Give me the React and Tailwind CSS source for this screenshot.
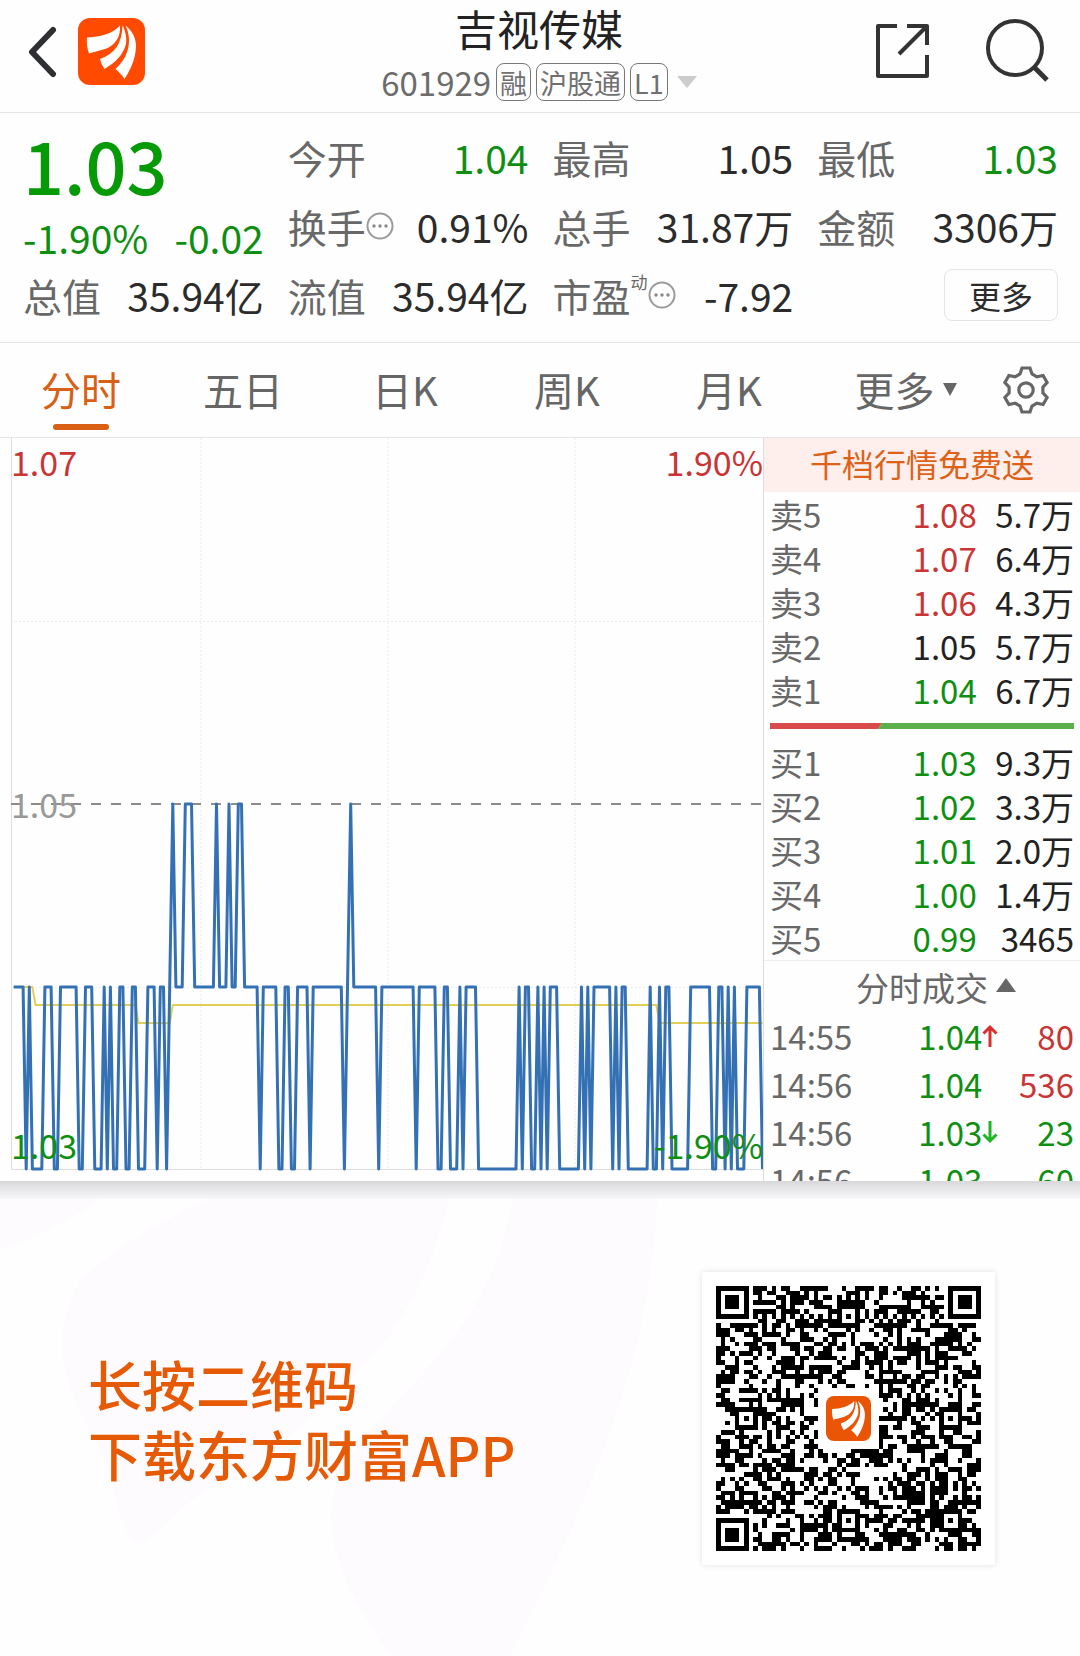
import React from "react";

const H = 366;
const M = 549;
const L = 731;

// Minute prices as runs: [level, number of minutes]
const PRICE_RUNS = [
  [M, 4], [L, 1], [M, 1], [L, 4], [M, 3], [L, 2], [M, 6], [L, 2], [M, 3], [L, 3],
  [M, 1], [L, 1], [M, 1], [L, 2], [M, 2], [L, 2], [M, 2], [L, 3], [M, 3], [L, 1],
  [M, 2], [L, 1], [M, 1], [H, 1], [M, 3], [H, 3], [M, 7], [H, 1], [M, 3], [H, 1],
  [M, 2], [H, 2], [M, 5], [L, 1], [M, 5], [L, 2], [M, 2], [L, 2], [M, 4], [L, 1],
  [M, 10], [L, 1], [M, 1], [H, 1], [M, 8], [L, 1], [M, 11], [L, 1], [M, 6], [L, 2],
  [M, 2], [L, 3], [M, 1], [L, 1], [M, 4], [L, 13], [M, 1], [L, 1], [M, 2], [L, 2],
  [M, 1], [L, 1], [M, 1], [L, 1], [M, 3], [L, 7], [M, 1], [L, 1], [M, 1], [L, 1],
  [M, 6], [L, 1], [M, 1], [L, 1], [M, 2], [L, 7], [M, 1], [L, 2], [M, 1], [L, 1],
  [M, 2], [L, 6], [M, 7], [L, 2], [M, 2], [L, 1], [M, 1], [L, 1], [M, 1], [L, 3],
  [M, 5], [L, 1],
];
const AVERAGE_RUNS = [[M, 7], [567, 33], [585, 11], [567, 156], [585, 34]];

function toPoints(runs) {
  const points = [];
  let minute = 0;
  runs.forEach(([level, count]) => {
    for (let k = 0; k < count; k += 1) {
      points.push(`${(2.7 + minute * 3.12).toFixed(1)},${level}`);
      minute += 1;
    }
  });
  return points.join(" ");
}

// Six-toothed gear outline around (25, 25)
const GEAR_POINTS = [0, 60, 120, 180, 240, 300]
  .flatMap((deg) => {
    const a = (deg * Math.PI) / 180;
    return [[-6, 16], [-4, 22], [4, 22], [6, 16]].map(([t, r]) => {
      const x = 25 + t * Math.cos(a) + r * Math.sin(a);
      const y = 25 + t * Math.sin(a) - r * Math.cos(a);
      return `${x.toFixed(1)},${y.toFixed(1)}`;
    });
  })
  .join(" ");

function BrandMark({ className, fill }) {
  return (
    <svg viewBox="0 0 67 67" className={className} aria-hidden="true">
      <rect width="67" height="67" rx="12" fill={fill} />
      <path fill="#fff" d="M9 19.500C22 19 34 16 42 7.500C43 20 36 28 27 31C21 33 15 34 11 35.500C9 30 8.500 25 9 19.500Z" />
      <path fill="#fff" d="M44.500 7.500C44 25 37 36 22 41C23 45 24.500 48 26.500 51C38 44 45 37 48 26C49 19 47 12 44.500 7.500Z" />
      <path fill="#fff" d="M47.500 7.500C55 23 50 40 37.500 51C41 54 44 57 46.500 61C55 48 58 37 58 27C57.500 18 53 12 47.500 7.500Z" />
    </svg>
  );
}

function Dots() {
  return (
    <svg viewBox="0 0 28 28" className="size-7 shrink-0" aria-hidden="true">
      <circle cx="14" cy="14" r="12.5" fill="none" stroke="#9a9a9a" strokeWidth="2" />
      <circle cx="8" cy="14" r="1.7" fill="#888" />
      <circle cx="14" cy="14" r="1.7" fill="#888" />
      <circle cx="20" cy="14" r="1.7" fill="#888" />
    </svg>
  );
}

function Quote({ label, value, color = "text-[#2b2b2b]", dots, note }) {
  return (
    <div className="flex h-[69px] items-center justify-between whitespace-nowrap">
      <dt className="flex items-center text-[#686868]">
        {label}
        {note && <span className="self-start text-[17px] leading-5">{note}</span>}
        {dots && <Dots />}
      </dt>
      <dd className={color}>{value}</dd>
    </div>
  );
}

function Tag({ children }) {
  return (
    <span className="flex h-[38px] items-center rounded-lg border border-[#777] px-[3px] text-[27px] leading-none text-[#707070]">
      {children}
    </span>
  );
}

const RED = "text-[#c93535]";
const GREEN = "text-[#0f8f12]";
const DARK = "text-[#222]";

const SELLS = [
  ["卖5", "1.08", "5.7万", RED],
  ["卖4", "1.07", "6.4万", RED],
  ["卖3", "1.06", "4.3万", RED],
  ["卖2", "1.05", "5.7万", DARK],
  ["卖1", "1.04", "6.7万", GREEN],
];
const BUYS = [
  ["买1", "1.03", "9.3万", GREEN],
  ["买2", "1.02", "3.3万", GREEN],
  ["买3", "1.01", "2.0万", GREEN],
  ["买4", "1.00", "1.4万", GREEN],
  ["买5", "0.99", "3465", GREEN],
];
const TRADES = [
  ["14:55", "1.04", "up", "80", RED],
  ["14:56", "1.04", "", "536", RED],
  ["14:56", "1.03", "down", "23", GREEN],
  ["14:56", "1.03", "", "60", GREEN],
];

function Book({ rows }) {
  return (
    <table className="w-full table-fixed text-right text-[33px] leading-[44px]">
      <tbody>
        {rows.map(([name, price, amount, color]) => (
          <tr key={name} className="h-11">
            <th scope="row" className="w-[28%] p-0 text-left font-normal text-[#686868]">{name}</th>
            <td className={`p-0 ${color}`}>{price}</td>
            <td className="w-[32%] p-0 text-[#222]">{amount}</td>
          </tr>
        ))}
      </tbody>
    </table>
  );
}

function Arrow({ dir }) {
  if (!dir) return null;
  return dir === "up" ? (
    <svg viewBox="0 0 16 24" className="h-6 w-4" fill="none" stroke="#d92f2f" strokeWidth="3" aria-label="up">
      <path d="M8 23V3M1.5 9.5L8 3L14.5 9.5" />
    </svg>
  ) : (
    <svg viewBox="0 0 16 24" className="h-6 w-4" fill="none" stroke="#1fb526" strokeWidth="3" aria-label="down">
      <path d="M8 1V21M1.5 14.5L8 21L14.5 14.5" />
    </svg>
  );
}

// 57-module matrix code with finder, timing and alignment patterns
const SIZE = 57;
function buildCode() {
  let seed = 20231;
  const next = () => {
    seed = (seed * 1103515245 + 12345) % 2147483648;
    return seed / 2147483648;
  };
  const grid = Array.from({ length: SIZE }, () => Array.from({ length: SIZE }, () => next() < 0.51));
  for (let i = 8; i < SIZE - 8; i += 1) {
    grid[6][i] = i % 2 === 0;
    grid[i][6] = i % 2 === 0;
  }
  const centers = [6, 28, 50];
  centers.forEach((cy) => centers.forEach((cx) => {
    const corner = (cx === 6 && cy !== 28) || (cy === 6 && cx === 50);
    if (corner) return;
    for (let y = -2; y <= 2; y += 1) {
      for (let x = -2; x <= 2; x += 1) {
        grid[cy + y][cx + x] = Math.max(Math.abs(x), Math.abs(y)) !== 1;
      }
    }
  }));
  [[0, 0], [SIZE - 7, 0], [0, SIZE - 7]].forEach(([ox, oy]) => {
    for (let y = -1; y <= 7; y += 1) {
      for (let x = -1; x <= 7; x += 1) {
        const gy = oy + y;
        const gx = ox + x;
        if (gy < 0 || gx < 0 || gy >= SIZE || gx >= SIZE) continue;
        const d = Math.max(Math.abs(x - 3), Math.abs(y - 3));
        grid[gy][gx] = d !== 4 && d !== 2;
      }
    }
  });
  let path = "";
  grid.forEach((row, y) => row.forEach((on, x) => {
    const inLogo = x > 21 && x < 35 && y > 21 && y < 35;
    if (on && !inLogo) path += `M${x} ${y}h1v1h-1z`;
  }));
  return path;
}
const CODE_PATH = buildCode();

export default function App() {
  return (
    <div className="flex min-h-screen flex-col bg-[#fefefe] font-['Noto_Sans_CJK_SC',sans-serif] text-[#2b2b2b]">
      <header className="grid h-[113px] grid-cols-[1fr_auto_1fr] items-start border-b border-[#e3e4e6] pr-[30px] pl-7">
        <div className="flex items-center gap-5 pt-[18px]">
          <button type="button" aria-label="返回">
            <svg viewBox="0 0 30 52" className="h-[52px] w-[30px]" fill="none" stroke="#2f3033" strokeWidth="6" strokeLinecap="round" strokeLinejoin="round">
              <path d="M25 4L4 26L25 48" />
            </svg>
          </button>
          <BrandMark className="size-[67px]" fill="#ff4a00" />
        </div>
        <div className="flex flex-col items-center">
          <h1 className="h-[62px] text-[42px] leading-[56px] text-[#222]">吉视传媒</h1>
          <div className="flex h-10 items-center gap-[5px] text-[33px] leading-10 text-[#6c6c6c]">
            <span>601929</span>
            <Tag>融</Tag>
            <Tag>沪股通</Tag>
            <Tag>L1</Tag>
            <svg viewBox="0 0 20 12" className="ml-1 h-3 w-5" aria-hidden="true">
              <path d="M0 0H20L10 12Z" fill="#ccc" />
            </svg>
          </div>
        </div>
        <div className="flex items-start justify-end gap-14 pt-[18px]">
          <button type="button" aria-label="分享">
            <svg viewBox="0 0 56 64" className="h-16 w-14" fill="none" stroke="#333" strokeWidth="4" strokeLinejoin="round">
              <path d="M23 8H4V58H53V37M33 8H53V27M53 8L25 36" />
            </svg>
          </button>
          <button type="button" aria-label="搜索">
            <svg viewBox="0 0 64 66" className="h-[66px] w-16" fill="none" stroke="#333" strokeWidth="4">
              <circle cx="29" cy="30" r="27" />
              <path d="M48 49L61 62" strokeWidth="5" />
            </svg>
          </button>
        </div>
      </header>

      <dl className="grid grid-cols-4 grid-rows-3 gap-x-6 border-b border-[#e3e4e6] pt-[9px] pr-[22px] pb-[13px] pl-[23px] text-[39px] leading-[46px]">
        <div className={`row-span-2 flex flex-col whitespace-nowrap ${GREEN}`}>
          <dt aria-label="最新价" />
          <dd className="h-[92px] text-[72px] leading-[84px] font-medium text-[#069a06]">1.03</dd>
          <dd className="flex justify-between"><span>-1.90%</span><span>-0.02</span></dd>
        </div>
        <Quote label="今开" value="1.04" color={GREEN} />
        <Quote label="最高" value="1.05" />
        <Quote label="最低" value="1.03" color={GREEN} />
        <Quote label="换手" value="0.91%" dots />
        <Quote label="总手" value="31.87万" />
        <Quote label="金额" value="3306万" />
        <Quote label="总值" value="35.94亿" />
        <Quote label="流值" value="35.94亿" />
        <Quote label="市盈" value="-7.92" note="动" dots />
        <div className="flex items-center justify-end">
          <button type="button" className="h-[52px] w-[114px] rounded-lg border border-[#e6e4e6] text-[32px] leading-[46px]">更多</button>
        </div>
      </dl>

      <nav className="flex h-[95px] items-stretch border-b border-[#e3e4e6] text-[40px] leading-[92px] text-[#666]">
        {["分时", "五日", "日K", "周K", "月K"].map((name, i) => (
          <button key={name} type="button" className={`flex w-[15%] flex-col items-center ${i === 0 ? "text-[#d95f14]" : ""}`}>
            <span className="h-[81px]">{name}</span>
            {i === 0 && <span className="h-1.5 w-14 rounded-full bg-[#d95f14]" />}
          </button>
        ))}
        <button type="button" className="flex flex-1 items-start justify-center gap-2">
          更多
          <svg viewBox="0 0 14 13" className="mt-10 h-[13px] w-3.5" aria-hidden="true">
            <path d="M0 0H14L7 13Z" fill="#666" />
          </svg>
        </button>
        <button type="button" aria-label="设置" className="mr-[29px] flex items-center">
          <svg viewBox="0 0 50 50" className="size-[50px]" fill="none" stroke="#666" strokeWidth="3.2">
            <polygon points={GEAR_POINTS} />
            <circle cx="25" cy="25" r="7.2" />
          </svg>
        </button>
      </nav>

      <main className="flex h-[743px] overflow-hidden">
        <section className="relative ml-[11px] flex-1 border-r border-[#dcdce0]" aria-label="分时走势">
          <svg viewBox="0 0 752 743" preserveAspectRatio="none" className="block h-full w-full" fill="none">
            <path d="M0.5 0V731.5H752" stroke="#dedee2" />
            <path d="M190 0V731M377 0V731M564 0V731M0 183.5H752M0 549.5H752" stroke="#ebe9eb" strokeDasharray="2 2" />
            <path d="M0 366H752" stroke="#8f8a8d" strokeWidth="2" strokeDasharray="10 10" />
            <polyline points={toPoints(AVERAGE_RUNS)} stroke="#e3cf58" strokeWidth="2" />
            <polyline points={toPoints(PRICE_RUNS)} stroke="#3471b4" strokeWidth="3" strokeLinejoin="round" />
          </svg>
          <div className="absolute inset-x-0 top-0 flex h-[731px] flex-col justify-between text-[34px] leading-[48px]">
            <div className={`flex justify-between ${RED}`}><span>1.07</span><span>1.90%</span></div>
            <div className="text-[#999]">1.05</div>
            <div className={`flex justify-between ${GREEN}`}><span>1.03</span><span>-1.90%</span></div>
          </div>
        </section>

        <aside className="w-[316px] shrink-0">
          <a href="#level" className="block h-[54px] bg-[#feefec] text-center text-[32px] leading-[50px] text-[#dd6117]">千档行情免费送</a>
          <div className="pr-1.5 pl-1.5">
            <Book rows={SELLS} />
            <svg viewBox="0 0 304 6" preserveAspectRatio="none" className="my-[11px] block h-1.5 w-full" aria-hidden="true">
              <path d="M0 0H112L108 6H0Z" fill="#d94a4a" />
              <path d="M112 0H304V6H108Z" fill="#5bb04b" />
            </svg>
            <Book rows={BUYS} />
          </div>
          <button type="button" className="flex h-[52px] w-full items-center justify-center gap-2 border-t border-[#f0f0f0] pl-7 text-[33px] leading-[52px] text-[#686868]">
            分时成交
            <svg viewBox="0 0 20 14" className="mb-1 h-3.5 w-5" aria-hidden="true"><path d="M0 14L10 0L20 14Z" fill="#666" /></svg>
          </button>
          <table className="w-full table-fixed text-[33px] leading-[48px]">
            <tbody>
              {TRADES.map(([time, price, dir, amount, color], i) => (
                <tr key={i} className="h-12">
                  <td className="w-[45%] p-0 pl-1.5 text-[#686868]">{time}</td>
                  <td className={`w-[31%] p-0 pl-3 ${GREEN}`}>
                    <span className="flex items-center">{price}<Arrow dir={dir} /></span>
                  </td>
                  <td className={`p-0 pr-1.5 text-right ${color}`}>{amount}</td>
                </tr>
              ))}
            </tbody>
          </table>
        </aside>
      </main>

      <footer className="relative flex flex-1 items-center justify-between pr-[85px] pl-[88px]">
        <svg viewBox="0 0 1080 475" preserveAspectRatio="none" className="absolute inset-0 h-full w-full" aria-hidden="true">
          <path fill="#fefbff" d="M0 0H130C90 25 50 55 0 68ZM240 0H455C435 80 405 150 352 195C310 240 255 290 215 305C180 320 160 360 135 363C110 330 115 290 95 260C60 200 50 150 80 100C130 50 190 30 240 0ZM515 0H658C655 150 610 280 510 475H390C360 430 345 400 340 385C325 340 325 300 370 250C430 180 500 130 515 0Z" />
        </svg>
        <div className="absolute inset-x-0 top-0 h-[18px] bg-linear-to-b from-[#d8d7da] to-[#f8f7f9]" />
        <p className="relative text-[54px] leading-[70px] font-medium text-[#e65a05]">
          长按二维码
          <br />
          下载东方财富APP
        </p>
        <div className="relative grid size-[293px] place-items-center bg-white shadow-[0_0_6px_rgba(0,0,0,0.12)]">
          <svg viewBox="0 0 57 57" className="col-start-1 row-start-1 size-[265px]" shapeRendering="crispEdges" role="img" aria-label="二维码">
            <path d={CODE_PATH} fill="#000" />
          </svg>
          <BrandMark className="col-start-1 row-start-1 size-[45px]" fill="#e95504" />
        </div>
      </footer>
    </div>
  );
}
